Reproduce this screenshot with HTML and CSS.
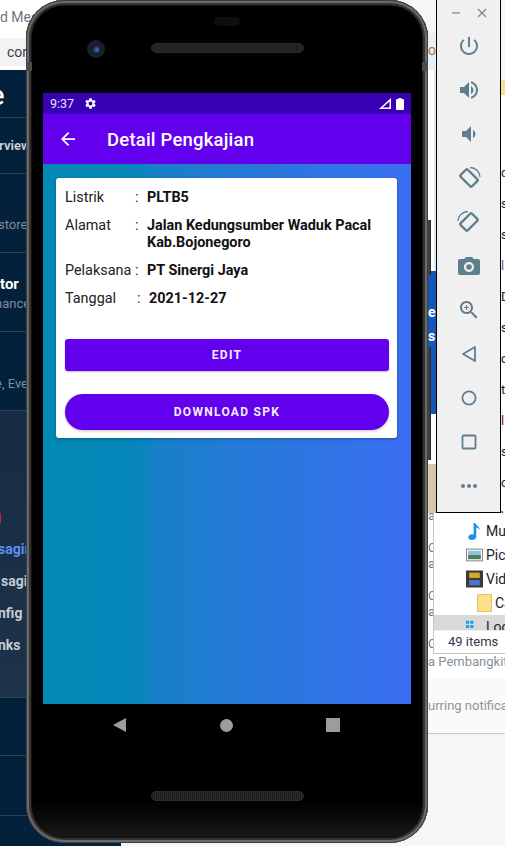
FILE: index.html
```html
<!DOCTYPE html>
<html>
<head>
	<meta charset="utf-8">
	<meta name="viewport" content="width=device-width, initial-scale=1">
	<title>Detail Pengkajian</title>
	<link rel="stylesheet" href="styles.css">
</head>
<body>
	<div class="desktop">

		<!-- browser window behind everything -->
		<div class="browser">
			<div class="browser-tab">d Mes</div>
			<div class="browser-address">cor</div>
		</div>

		<nav class="sidebar">
			<div class="side-section side-brand">e</div>
			<div class="side-section side-overview">rview</div>
			<div class="side-section side-store">store</div>
			<div class="side-section side-tor"><b>tor</b><span>nance</span></div>
			<div class="side-section side-eve">e, Eve</div>
			<div class="side-section side-menu">
				<i class="side-mark"></i>
				<a class="active">sagir</a>
				<a>sagi</a>
				<a>nfig</a>
				<a>nks</a>
			</div>
			<div class="side-section side-blank-a"></div>
			<div class="side-section side-blank-b"></div>
		</nav>

		<div class="page-rest">
			<div class="rest-name">a Pembangkit</div>
			<div class="rest-panel">urring notificati</div>
		</div>

		<div class="back-strip">
			<div class="strip-head">or</div>
			<div class="strip-gap"></div>
			<div class="strip-blue"><span>e</span><span>s</span></div>
			<div class="strip-beige"></div>
		</div>

		<div class="code-lines">
			<span class="gold"></span>
			<p>d</p><p>s</p><p>s</p><p class="lilac">l</p><p>D</p><p>s</p><p>c</p><p>tl</p>
			<p class="maroon">l</p><p>s</p><p>c</p><p>v</p>
		</div>

		<!-- explorer window -->
		<div class="explorer">
			<div class="tree">
				<div class="tree-row">
					<svg class="tree-icon" viewBox="0 0 16 20"><path d="M7 1h2c.5 3 5 4 5 8-1-2-3-3-4-3v10c0 2.500-2.500 4-5 4-2.500 0-4-1.500-4-3 0-2 2-3.500 4-3.500.7 0 1.400.2 2 .5z" fill="#1e90e8"/></svg>
					<span>Mu</span>
				</div>
				<div class="tree-row">
					<svg class="tree-icon" viewBox="0 0 16 12"><rect x=".5" y=".5" width="15" height="11" fill="#fff" stroke="#8a8a8a"/><rect x="2" y="2" width="12" height="4" fill="#8fc4e0"/><rect x="2" y="6" width="12" height="4" fill="#4f7d5c"/></svg>
					<span>Pict</span>
				</div>
				<div class="tree-row">
					<svg class="tree-icon" viewBox="0 0 16 16"><rect width="16" height="16" fill="#3a3a3a"/><rect x="3" y="2" width="10" height="5" fill="#d8a72c"/><rect x="3" y="9" width="10" height="5" fill="#4b78c8"/></svg>
					<span>Vid</span>
				</div>
				<div class="tree-row tree-sub">
					<svg class="tree-icon" viewBox="0 0 14 17"><path d="M.5.5h13v16H.5z" fill="#fbe08a" stroke="#e6c15c"/></svg>
					<span>Ca</span>
				</div>
				<div class="tree-row tree-selected">
					<svg class="tree-icon" viewBox="0 0 16 12"><path d="M0 0h3v3H0zM4 0h3v3H4zM0 4h3v3H0zM4 4h3v3H4z" fill="#19a3ee"/><path d="M3 9h12v3H3z" fill="#b9c0c6"/></svg>
					<span>Loc</span>
				</div>
			</div>
			<div class="explorer-status">49 items</div>
		</div>
		<div class="explorer-edge"><span>a</span><span>C</span><span>a</span><span>C</span><span>a</span><span>C</span></div>

		<!-- emulator toolbar -->
		<aside class="toolbar">
			<div class="toolbar-head">
				<svg viewBox="0 0 12 12"><path d="M2 6h8" stroke-width="1.200"/></svg>
				<svg viewBox="0 0 12 12"><path d="M2 2l8 8M10 2l-8 8" stroke-width="1.200"/></svg>
			</div>
			<div class="tool"><svg viewBox="0 0 24 24"><path d="M13 3h-2v10h2V3zm4.830 2.170l-1.420 1.420C17.990 7.860 19 9.810 19 12c0 3.870-3.130 7-7 7s-7-3.130-7-7c0-2.190 1.010-4.140 2.580-5.420L6.170 5.170C4.230 6.820 3 9.260 3 12c0 4.970 4.030 9 9 9s9-4.030 9-9c0-2.740-1.230-5.180-3.170-6.830z"/></svg></div>
			<div class="tool"><svg viewBox="0 0 24 24"><path d="M3 9v6h4l5 5V4L7 9H3zm13.500 3c0-1.770-1.020-3.290-2.500-4.030v8.050c1.480-.73 2.500-2.250 2.500-4.020zM14 3.230v2.060c2.890.86 5 3.540 5 6.710s-2.110 5.850-5 6.710v2.060c4.010-.91 7-4.490 7-8.770s-2.990-7.860-7-8.770z"/></svg></div>
			<div class="tool"><svg viewBox="0 0 24 24"><path d="M18.500 12c0-1.770-1.020-3.290-2.500-4.030v8.050c1.480-.73 2.500-2.250 2.500-4.020zM5 9v6h4l5 5V4L9 9H5z"/></svg></div>
			<div class="tool"><svg viewBox="0 0 24 24" class="outline"><rect x="4" y="7" width="16" height="10" rx="1" transform="rotate(45 12 12)" stroke-width="2.400"/><path d="M13 1.500A10 10 0 0 1 23 11" stroke-width="1.300"/></svg></div>
			<div class="tool"><svg viewBox="0 0 24 24" class="outline"><rect x="4" y="7" width="16" height="10" rx="1" transform="rotate(-45 12 12)" stroke-width="2.400"/><path d="M11 1.500A10 10 0 0 0 1 11" stroke-width="1.300"/></svg></div>
			<div class="tool"><svg viewBox="0 0 24 24"><path fill-rule="evenodd" d="M9 3L7.170 5H3c-1.100 0-2 .9-2 2v12c0 1.100.9 2 2 2h18c1.100 0 2-.9 2-2V7c0-1.100-.9-2-2-2h-4.170L15 3H9zm3 15c-2.760 0-5-2.240-5-5s2.240-5 5-5 5 2.240 5 5-2.240 5-5 5z"/><circle cx="12" cy="13" r="2.800"/></svg></div>
			<div class="tool"><svg viewBox="0 0 24 24"><path d="M15.500 14h-.79l-.28-.27C15.410 12.590 16 11.110 16 9.500 16 5.910 13.090 3 9.500 3S3 5.910 3 9.500 5.910 16 9.500 16c1.610 0 3.090-.59 4.230-1.570l.27.280v.79l5 4.990L20.490 19l-4.990-5zm-6 0C7.010 14 5 11.990 5 9.500S7.010 5 9.500 5 14 7.010 14 9.500 11.990 14 9.500 14zm.5-7H9v2H7v1h2v2h1v-2h2V9h-2z"/></svg></div>
			<div class="tool"><svg viewBox="0 0 24 24" class="outline"><path d="M18 5v14L6 12z" stroke-width="1.800" stroke-linejoin="round"/></svg></div>
			<div class="tool"><svg viewBox="0 0 24 24" class="outline"><circle cx="12" cy="12" r="6.600" stroke-width="1.800"/></svg></div>
			<div class="tool"><svg viewBox="0 0 24 24" class="outline"><rect x="5.500" y="5.500" width="13" height="13" rx="1" stroke-width="1.800"/></svg></div>
			<div class="tool"><svg viewBox="0 0 24 24"><circle cx="6" cy="12" r="2"/><circle cx="12" cy="12" r="2"/><circle cx="18" cy="12" r="2"/></svg></div>
		</aside>

		<!-- the phone -->
		<div class="side-button side-button-top"></div>
		<div class="side-button side-button-low"></div>
		<div class="phone">
			<i class="antenna antenna-left"></i>
			<i class="antenna antenna-right"></i>
			<div class="phone-top">
				<div class="camera"><i></i></div>
				<div class="speaker"></div>
				<div class="sensor"></div>
			</div>
			<main class="screen">
				<div class="statusbar">
					<span class="clock">9:37</span>
					<svg class="gear" viewBox="0 0 24 24"><path d="M19.140 12.940c.04-.3.060-.61.060-.94 0-.32-.02-.64-.07-.94l2.030-1.580c.18-.14.23-.41.120-.61l-1.920-3.320c-.12-.22-.37-.29-.59-.22l-2.390.96c-.5-.38-1.030-.7-1.620-.94L14.400 2.810c-.04-.24-.24-.41-.48-.41h-3.840c-.24 0-.43.170-.47.410l-.36 2.540c-.59.240-1.130.57-1.620.94l-2.390-.96c-.22-.08-.47 0-.59.220L2.740 8.870c-.12.210-.08.470.12.610l2.030 1.580c-.05.300-.09.630-.09.940s.02.640.07.940l-2.030 1.580c-.18.140-.23.410-.12.610l1.920 3.320c.12.220.37.290.59.220l2.390-.96c.5.380 1.030.7 1.620.94l.36 2.540c.05.240.24.410.48.410h3.840c.24 0 .44-.17.47-.41l.36-2.540c.59-.24 1.130-.56 1.620-.94l2.390.96c.22.080.47 0 .59-.22l1.920-3.320c.12-.22.070-.47-.12-.61l-2.010-1.580zM12 15.600c-1.980 0-3.600-1.620-3.600-3.600s1.620-3.600 3.600-3.600 3.600 1.620 3.600 3.600-1.620 3.600-3.600 3.600z"/></svg>
					<span class="status-space"></span>
					<svg class="signal" viewBox="0 0 12 11"><path fill-rule="evenodd" d="M12 0v11H0zM10.500 3.600L3.600 9.500h6.900z"/></svg>
					<svg class="battery" viewBox="0 0 8 12"><path d="M2.500 0h3v1H7a1 1 0 0 1 1 1v9a1 1 0 0 1-1 1H1a1 1 0 0 1-1-1V2a1 1 0 0 1 1-1h1.500z"/></svg>
				</div>
				<header class="appbar">
					<svg class="back-arrow" viewBox="0 0 16 16"><path d="M16 7H3.830l5.590-5.590L8 0 0 8l8 8 1.410-1.410L3.830 9H16z"/></svg>
					<h1>Detail Pengkajian</h1>
				</header>
				<section class="content">
					<div class="card">
						<div class="info-row">
							<span class="info-label">Listrik</span>
							<span class="info-colon">:</span>
							<span class="info-value">PLTB5</span>
						</div>
						<div class="info-row">
							<span class="info-label">Alamat</span>
							<span class="info-colon">:</span>
							<span class="info-value">Jalan Kedungsumber Waduk Pacal Kab.Bojonegoro</span>
						</div>
						<div class="info-row">
							<span class="info-label">Pelaksana</span>
							<span class="info-colon">:</span>
							<span class="info-value">PT Sinergi Jaya</span>
						</div>
						<div class="info-row info-row-shift">
							<span class="info-label">Tanggal</span>
							<span class="info-colon">:</span>
							<span class="info-value">2021-12-27</span>
						</div>
						<button class="btn btn-edit">EDIT</button>
						<button class="btn btn-download">DOWNLOAD SPK</button>
					</div>
				</section>
			</main>
			<div class="navbar">
				<i class="nav-back"></i>
				<i class="nav-home"></i>
				<i class="nav-recent"></i>
			</div>
			<div class="speaker speaker-bottom"></div>
		</div>
	</div>
</body>
</html>
```

FILE: styles.css
```css
* {
    box-sizing: border-box;
}

html, body {
    margin: 0;
    height: 100%;
}

body {
    font-family: Roboto, "Liberation Sans", sans-serif;
    overflow: hidden;
}

.desktop {
    position: relative;
    width: 505px;
    height: 846px;
    overflow: hidden;
    background-color: #f5f6f8;
}

/* ---- windows behind the phone ---- */

.browser {
    position: absolute;
    left: 0;
    top: 0;
    width: 60px;
    height: 70px;
    background-color: #fff;
    color: #5f6b7a;
    font-size: 14px;
}

.browser-tab {
    height: 38px;
    padding-top: 9px;
    white-space: nowrap;
    color: #6d7480;
}

.browser-address {
    height: 28px;
    padding: 6px 0 0 7px;
    background-color: #f1f3f4;
    color: #3c4043;
}

.sidebar {
    position: absolute;
    left: 0;
    top: 70px;
    width: 121px;
    height: 776px;
    background-color: #04213c;
    color: #aeb8c4;
    font-size: 13px;
    display: flex;
    flex-direction: column;
}

.side-section {
    border-bottom: 1px solid #2a4258;
    white-space: nowrap;
}

.side-brand {
    height: 48px;
    padding-top: 10px;
    text-indent: -10px;
    color: #fff;
    font-size: 27px;
    font-weight: 500;
}

.side-overview {
    height: 56px;
    padding-top: 20px;
    text-indent: -1px;
    font-weight: 700;
    color: #c7ced6;
}

.side-store {
    height: 79px;
    padding-top: 43px;
    text-indent: -2px;
    color: #7f8d9c;
}

.side-tor {
    height: 79px;
    padding-top: 22px;
}

.side-tor b {
    display: block;
    color: #fff;
    font-size: 15px;
}

.side-tor span {
    display: block;
    margin-top: 3px;
    text-indent: -5px;
    color: #7f8d9c;
}

.side-eve {
    height: 79px;
    padding-top: 44px;
    text-indent: -5px;
    color: #7f8d9c;
}

.side-menu {
    position: relative;
    height: 287px;
    padding-top: 129px;
    background: linear-gradient(180deg, #152c44, #1c3349);
    font-size: 14px;
    font-weight: 700;
    display: flex;
    flex-direction: column;
    gap: 13px;
    color: #c4cbd3;
}

.side-menu a {
    line-height: 19px;
    text-indent: -2px;
}

.side-menu a:nth-child(3) {
    text-indent: 1px;
}

.side-menu .active {
    color: #5b8ff0;
}

.side-mark {
    position: absolute;
    left: 0;
    top: 102px;
    width: 1px;
    height: 10px;
    background-color: #c8193f;
}

.side-blank-a {
    height: 58px;
}

.side-blank-b {
    height: 60px;
}

.page-rest {
    position: absolute;
    left: 428px;
    top: 654px;
    width: 77px;
    height: 192px;
    font-size: 13px;
    color: #86909c;
    white-space: nowrap;
    overflow: hidden;
}

.rest-name {
    height: 24px;
    background-color: #fff;
}

.rest-panel {
    height: 56px;
    padding-top: 20px;
    background-color: #fafafa;
    color: #9a9094;
    border-bottom: 1px solid #c8c8c8;
}

.back-strip {
    position: absolute;
    left: 428px;
    top: 33px;
    width: 8px;
    height: 480px;
    background-color: #fff;
    font-size: 14px;
    display: flex;
    flex-direction: column;
    overflow: hidden;
}

.strip-head {
    height: 37px;
    padding-top: 9px;
    color: #b5703c;
    background-color: #e8eef1;
    white-space: nowrap;
}

.strip-gap {
    height: 205px;
    background: linear-gradient(90deg, #fff 70%, #dbe7f3 70%);
}

.strip-blue {
    height: 145px;
    background-color: #1656b8;
    color: #fff;
    display: flex;
    flex-direction: column;
    gap: 4px;
    padding-top: 31px;
    font-weight: 700;
    line-height: 20px;
}

.strip-beige {
    height: 50px;
    margin-top: 50px;
    background-color: #d9c6ab;
}

.code-lines {
    position: absolute;
    left: 501px;
    top: 80px;
    width: 4px;
    height: 433px;
    background-color: #fff;
    font-size: 13px;
    color: #222;
    overflow: hidden;
}

.code-lines p {
    margin: 0;
    height: 31px;
    line-height: 31px;
}

.code-lines p:first-of-type {
    margin-top: 77px;
}

.code-lines .gold {
    position: absolute;
    left: 0;
    top: 0;
    width: 4px;
    height: 15px;
    background-color: #fcdf8e;
}

.code-lines .lilac {
    color: #8a3fb0;
}

.code-lines .maroon {
    color: #7a1028;
}

.explorer {
    position: absolute;
    left: 433px;
    top: 513px;
    width: 72px;
    height: 141px;
    background-color: #fff;
    border-left: 1px solid #c4c4c4;
    border-bottom: 1px solid #c4c4c4;
    font-size: 14px;
    color: #1c1c2b;
    display: flex;
    flex-direction: column;
}

.tree {
    height: 117px;
    padding-top: 6px;
    overflow: hidden;
}

.tree-row {
    height: 24px;
    display: flex;
    align-items: center;
    padding-left: 32px;
    gap: 3px;
    white-space: nowrap;
}

.tree-icon {
    width: 17px;
    height: 18px;
    flex: none;
}

.tree-sub {
    padding-left: 42px;
    gap: 2px;
}

.tree-selected {
    background-color: #d9d9d9;
}

.explorer-status {
    height: 23px;
    padding: 3px 0 0 14px;
    font-size: 13px;
    color: #2b3a4a;
    border-top: 1px solid #eee;
}

.explorer-edge {
    position: absolute;
    left: 428px;
    top: 513px;
    width: 5px;
    height: 141px;
    background-color: #fff;
    overflow: hidden;
    font-size: 13px;
    color: #777;
    display: flex;
    flex-direction: column;
    line-height: 16px;
}

.explorer-edge span:first-child {
    margin-top: -5px;
}

.explorer-edge span:nth-child(even) {
    margin-top: 16px;
}

/* ---- emulator toolbar ---- */

.toolbar {
    position: absolute;
    left: 436px;
    top: -1px;
    width: 65px;
    height: 514px;
    padding-top: 1px;
    background-color: #f0f0f0;
    border: 1px solid #000;
    display: flex;
    flex-direction: column;
    align-items: center;
}

.toolbar svg {
    fill: #5f7f8f;
}

.toolbar-head {
    width: 100%;
    height: 23px;
    flex: none;
    display: flex;
    justify-content: flex-end;
    align-items: center;
    gap: 14px;
    padding-right: 12px;
}

.toolbar-head svg {
    width: 12px;
    height: 12px;
    fill: none;
    stroke: #6f8a98;
}

.tool {
    width: 24px;
    height: 44px;
    flex: none;
    display: flex;
    align-items: center;
    justify-content: center;
}

.tool svg {
    width: 24px;
    height: 24px;
}

.toolbar svg.outline {
    fill: none;
    stroke: #5f7f8f;
}

/* ---- phone ---- */

.side-button {
    position: absolute;
    left: 427px;
    width: 4px;
    background: linear-gradient(90deg, #555, #2a2a2a);
}

.side-button-top {
    top: 220px;
    height: 55px;
}

.side-button-low {
    top: 347px;
    height: 113px;
}

.phone {
    position: absolute;
    left: 26px;
    top: 0;
    width: 402px;
    height: 843px;
    padding: 0 17px;
    border-radius: 38px;
    background: linear-gradient(180deg, #000 95%, #1c1c1c 100%);
    box-shadow: inset 0 0 0 1px #3f3f3f, inset 0 0 0 3px #6a6a6a, inset 0 0 0 5px #333, inset 0 0 0 6px #121212;
    display: flex;
    flex-direction: column;
}

.antenna {
    position: absolute;
    top: 62px;
    width: 6px;
    height: 9px;
    background-color: #4a4a4a;
}

.antenna-left {
    left: 0;
}

.antenna-right {
    right: 0;
}

.phone-top {
    position: relative;
    height: 93px;
    flex: none;
}

.camera {
    position: absolute;
    left: 44px;
    top: 40px;
    width: 18px;
    height: 18px;
    border-radius: 50%;
    background-color: #1b1f27;
    display: flex;
    align-items: center;
    justify-content: center;
}

.camera i {
    width: 8px;
    height: 8px;
    border-radius: 50%;
    background: radial-gradient(circle at 60% 60%, #4d6fd0, #0a1020 75%);
}

.speaker {
    position: absolute;
    left: 108px;
    top: 43px;
    width: 153px;
    height: 10px;
    border-radius: 5px;
    border: 1px solid #2d2d2d;
    background: repeating-linear-gradient(90deg, #1c1c1c 0 1px, #2b2b2b 1px 2px);
}

.speaker-bottom {
    left: 125px;
    top: 791px;
}

.sensor {
    position: absolute;
    left: 171px;
    top: 17px;
    width: 26px;
    height: 9px;
    border-radius: 5px;
    background-color: #0e0e0e;
}

.screen {
    width: 368px;
    height: 611px;
    flex: none;
    display: flex;
    flex-direction: column;
}

.statusbar {
    height: 21px;
    padding: 0 7px;
    background-color: #3700b3;
    color: #e8e4f6;
    font-size: 12.500px;
    display: flex;
    align-items: center;
    fill: #fff;
}

.clock {
    width: 34px;
}

.gear {
    width: 13px;
    height: 13px;
}

.status-space {
    flex: 1;
}

.signal {
    width: 12px;
    height: 11px;
    margin-right: 5px;
}

.battery {
    width: 8px;
    height: 12px;
}

.appbar {
    height: 50px;
    padding-left: 18px;
    background-color: #6200ee;
    color: #fff;
    fill: #fff;
    display: flex;
    align-items: center;
}

.back-arrow {
    width: 14px;
    height: 14px;
    margin-right: 32px;
}

.appbar h1 {
    margin: 1px 0 0;
    font-size: 18.500px;
    font-weight: 500;
    letter-spacing: 0.2px;
}

.content {
    flex: 1;
    padding: 14px 14px 0 13px;
    background: linear-gradient(90deg, #0388b4 0, #0586ba 26%, #1780c8 30%, #2878da 60%, #3a6ef3 100%);
}

.card {
    height: 260px;
    padding: 11px 9px 0;
    background-color: #fff;
    border-radius: 3px;
    box-shadow: 0 1px 3px rgba(0, 0, 0, 0.3);
    display: flex;
    flex-direction: column;
}

.info-row {
    display: flex;
    font-size: 14.400px;
    line-height: 17px;
    margin-bottom: 11px;
    color: #222;
}

.info-label {
    width: 70px;
    flex: none;
    white-space: nowrap;
}

.info-colon {
    width: 12px;
    flex: none;
}

.info-value {
    font-weight: 700;
    color: #111;
}

.info-row-shift .info-label {
    width: 72px;
}

.btn {
    width: 324px;
    border: 0;
    flex: none;
    background-color: #6200ee;
    color: #f3ecff;
    font-family: Roboto, "Liberation Sans", sans-serif;
    font-size: 12px;
    font-weight: 700;
    letter-spacing: 1.300px;
    padding: 0;
}

.btn-edit {
    height: 32px;
    margin-top: 21px;
    border-radius: 3px;
    box-shadow: 0 1px 2px rgba(0, 0, 0, 0.25);
}

.btn-download {
    height: 36px;
    margin-top: 23px;
    border-radius: 18px;
    box-shadow: 0 1px 3px rgba(0, 0, 0, 0.25);
}

.navbar {
    height: 42px;
    flex: none;
    padding: 0 0 0 70px;
    display: flex;
    align-items: center;
}

.nav-back {
    width: 0;
    height: 0;
    border-style: solid;
    border-width: 7.500px 13px 7.500px 0;
    border-color: transparent #9c9c9c transparent transparent;
    margin-right: 94px;
}

.nav-home {
    width: 13px;
    height: 13px;
    border-radius: 50%;
    background-color: #9c9c9c;
    margin-right: 93px;
}

.nav-recent {
    width: 14px;
    height: 14px;
    background-color: #9c9c9c;
}
```
